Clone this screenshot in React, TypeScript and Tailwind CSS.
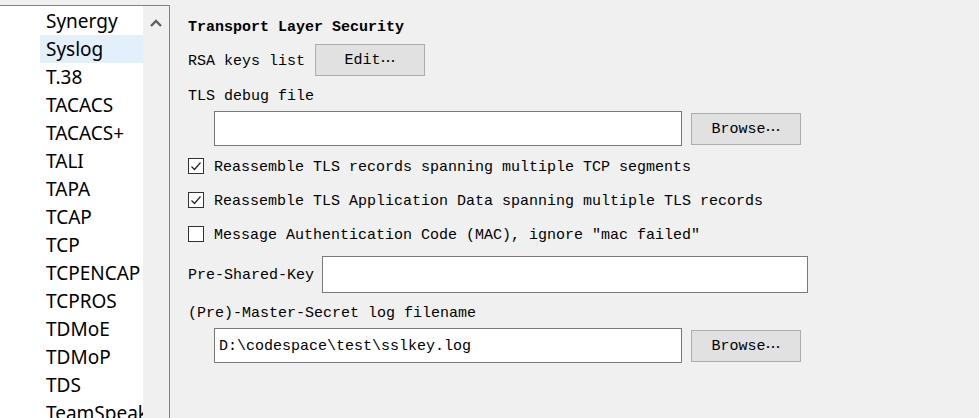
import { ReactNode } from "react";

const protocols = [
  "Synergy",
  "Syslog",
  "T.38",
  "TACACS",
  "TACACS+",
  "TALI",
  "TAPA",
  "TCAP",
  "TCP",
  "TCPENCAP",
  "TCPROS",
  "TDMoE",
  "TDMoP",
  "TDS",
  "TeamSpeak2",
];

const mono = "font-['Liberation_Mono','DejaVu_Sans_Mono',monospace]";

const Dots = () => (
  <span className="font-['Noto_Sans_CJK_SC',sans-serif]">…</span>
);

const Button = ({ children, className }: { children: ReactNode; className?: string }) => (
  <div
    className={`flex items-center justify-center border border-[#adadad] bg-[#e1e1e1] pt-[2px] text-black ${className ?? ""}`}
  >
    {children}
  </div>
);

const Check = ({ checked, label }: { checked: boolean; label: string }) => (
  <div className="flex h-[34px] items-center">
    <div className="flex h-[16px] w-[16px] items-center justify-center border border-[#333] bg-white">
      {checked && (
        <svg width="12" height="12" viewBox="0 0 12 12" fill="none">
          <path d="M1.5 6.5 L4.5 9.5 L10.5 2.5" stroke="#222" strokeWidth="1.2" />
        </svg>
      )}
    </div>
    <span className="ml-[10px] pt-[3px]">{label}</span>
  </div>
);

export default function App() {
  return (
    <div className="flex h-[418px] w-[979px] overflow-hidden bg-[#f0f0f0] text-black">
      {/* protocol list */}
      <div className="pt-[5px]">
        <div className="flex h-[420px] w-[170px] border-t border-r border-[#828282]">
          <div className="w-[143px] bg-white pt-[1px] font-['Noto_Sans','Open_Sans',sans-serif] text-[19px]">
            {protocols.map((p) => (
              <div
                key={p}
                className={`ml-[40px] flex h-[28px] items-center overflow-hidden whitespace-nowrap pl-[6px] leading-none ${
                  p === "Syslog" ? "bg-[#e3effa]" : ""
                }`}
              >
                {p}
              </div>
            ))}
          </div>
          <div className="flex flex-1 justify-center bg-[#f0f0f0] pt-[12px]">
            <svg width="12" height="9" viewBox="0 0 12 9">
              <path d="M1 8 L6 3 L11 8" stroke="#606060" strokeWidth="2.4" fill="none" />
            </svg>
          </div>
        </div>
      </div>

      {/* TLS settings */}
      <div className={`flex flex-col pl-[18px] text-[15px] leading-[18px] ${mono}`}>
        <div className="mt-[19px] h-[18px] font-bold">Transport Layer Security</div>

        <div className="mt-[7px] flex h-[32px] items-center">
          <span className="pt-[3px]">RSA keys list</span>
          <Button className="ml-[10px] h-[32px] w-[110px]">
            Edit<Dots />
          </Button>
        </div>

        <div className="mt-[12px] h-[18px]">TLS debug file</div>

        <div className="mt-[5px] flex h-[35px] items-center">
          <div className="ml-[26px] h-[35px] w-[468px] border border-[#7a7a7a] bg-white" />
          <Button className="ml-[9px] h-[32px] w-[110px]">
            Browse<Dots />
          </Button>
        </div>

        <div className="mt-[3px]">
          <Check checked label="Reassemble TLS records spanning multiple TCP segments" />
          <Check checked label="Reassemble TLS Application Data spanning multiple TLS records" />
          <Check checked={false} label='Message Authentication Code (MAC), ignore "mac failed"' />
        </div>

        <div className="mt-[5px] flex h-[37px] items-center">
          <span className="pt-[3px]">Pre-Shared-Key</span>
          <div className="ml-[8px] h-[37px] w-[486px] border border-[#7a7a7a] bg-white" />
        </div>

        <div className="mt-[12px] h-[18px]">(Pre)-Master-Secret log filename</div>

        <div className="mt-[5px] flex h-[35px] items-center">
          <div className="ml-[26px] flex h-[35px] w-[468px] items-center border border-[#7a7a7a] bg-white pl-[4px] pt-[3px]">
            D:\codespace\test\sslkey.log
          </div>
          <Button className="ml-[9px] h-[32px] w-[110px]">
            Browse<Dots />
          </Button>
        </div>
      </div>
    </div>
  );
}
